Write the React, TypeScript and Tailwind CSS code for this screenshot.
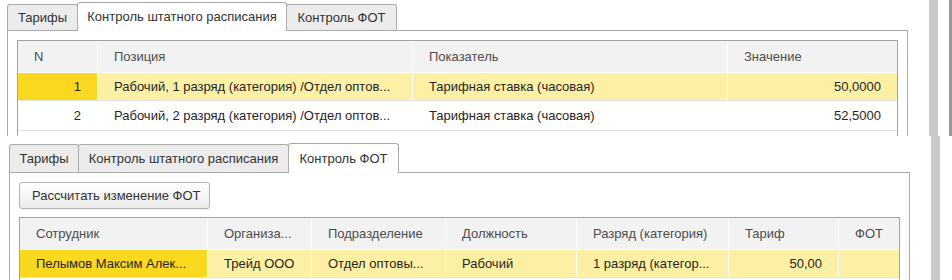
import React from "react";

type Tab = { label: string; w: number; active?: boolean };

function Tabs({ tabs, activeH, inactiveH }: { tabs: Tab[]; activeH: string; inactiveH: string }) {
  return (
    <div className="flex items-end">
      {tabs.map((t, i) => (
        <div
          key={t.label}
          style={{ width: t.w }}
          className={
            "relative flex items-center justify-center rounded-t-[3px] border-l border-r border-t border-[#ababab] text-[13px] text-[#333] " +
            (i > 0 ? "-ml-px " : "") +
            (t.active
              ? "z-20 -mb-px bg-white " + activeH
              : "z-10 bg-[#ececec] " + inactiveH)
          }
        >
          {t.label}
        </div>
      ))}
    </div>
  );
}

type Col = { title: string; w: number };

function HeaderRow({ cols }: { cols: Col[] }) {
  return (
    <div className="flex h-[32px] border-b border-white bg-[#f2f2f2] text-[13px] text-[#4d4d4d]">
      {cols.map((c, i) => (
        <div
          key={c.title}
          style={{ width: c.w }}
          className={
            "flex shrink-0 items-center pl-[16px] " +
            (i < cols.length - 1 ? "border-r border-white" : "")
          }
        >
          {c.title}
        </div>
      ))}
    </div>
  );
}

type Cell = { text: string; right?: boolean; current?: boolean };

function DataRow({ cols, cells, selected, h }: { cols: Col[]; cells: Cell[]; selected?: boolean; h: string }) {
  return (
    <div className={"flex border-b border-[#e3e3e3] text-[13px] text-[#262626] " + h + (selected ? " bg-[#fcf0a4]" : " bg-white")}>
      {cols.map((c, i) => {
        const cell = cells[i];
        return (
          <div
            key={c.title}
            style={{ width: c.w }}
            className={
              "flex shrink-0 items-center whitespace-nowrap overflow-hidden " +
              (cell.right ? "justify-end pr-[16px] " : "pl-[16px] ") +
              (i < cols.length - 1 ? "border-r border-white " : "") +
              (cell.current ? "bg-[#f9d81f]" : "")
            }
          >
            {cell.text}
          </div>
        );
      })}
    </div>
  );
}

const colsA: Col[] = [
  { title: "N", w: 80 },
  { title: "Позиция", w: 315 },
  { title: "Показатель", w: 315 },
  { title: "Значение", w: 169 },
];

const colsB: Col[] = [
  { title: "Сотрудник", w: 188 },
  { title: "Организа...", w: 104 },
  { title: "Подразделение", w: 134 },
  { title: "Должность", w: 131 },
  { title: "Разряд (категория)", w: 152 },
  { title: "Тариф", w: 110 },
  { title: "ФОТ", w: 60 },
];

export default function App() {
  return (
    <div
      className="h-[280px] w-[952px] overflow-hidden bg-white"
      style={{ fontFamily: '"Liberation Sans", Arial, sans-serif' }}
    >
      {/* Section A */}
      <div className="flex h-[136px] overflow-hidden">
        <div className="w-[7px] shrink-0" />
        <div className="flex w-[901px] shrink-0 flex-col pt-[2px]">
          <Tabs
            activeH="h-[29px]"
            inactiveH="h-[26px]"
            tabs={[
              { label: "Тарифы", w: 71 },
              { label: "Контроль штатного расписания", w: 210, active: true },
              { label: "Контроль ФОТ", w: 111 },
            ]}
          />
          <div className="flex-1 border-l border-r border-t border-[#ababab] px-[9px] pt-[9px]">
            <div className="h-[200px] border border-[#a3a3a3]">
              <HeaderRow cols={colsA} />
              <DataRow
                cols={colsA}
                selected
                h="h-[28px]"
                cells={[
                  { text: "1", right: true, current: true },
                  { text: "Рабочий, 1 разряд (категория) /Отдел оптов..." },
                  { text: "Тарифная ставка (часовая)" },
                  { text: "50,0000", right: true },
                ]}
              />
              <DataRow
                cols={colsA}
                h="h-[30px]"
                cells={[
                  { text: "2", right: true },
                  { text: "Рабочий, 2 разряд (категория) /Отдел оптов..." },
                  { text: "Тарифная ставка (часовая)" },
                  { text: "52,5000", right: true },
                ]}
              />
            </div>
          </div>
        </div>
        <div className="w-[21px] shrink-0" />
        <div className="w-[9px] shrink-0 bg-[#c9c9c9]" />
        <div className="w-[11px] shrink-0" />
        <div className="w-[3px] shrink-0 bg-[#9a9a9a]" />
      </div>

      {/* Section B */}
      <div className="flex h-[144px] overflow-hidden">
        <div className="w-[9px] shrink-0" />
        <div className="flex w-[901px] shrink-0 flex-col pt-[7px]">
          <Tabs
            activeH="h-[30px]"
            inactiveH="h-[28px]"
            tabs={[
              { label: "Тарифы", w: 70 },
              { label: "Контроль штатного расписания", w: 211 },
              { label: "Контроль ФОТ", w: 111, active: true },
            ]}
          />
          <div className="flex-1 border-l border-r border-t border-[#ababab] px-[9px] pt-[9px]">
            <div className="flex h-[27px] w-[191px] items-center rounded-[3px] border border-[#b4b4b4] bg-gradient-to-b from-white to-[#ebebeb] pl-[12px] text-[13px] text-[#333] shadow-[0_1px_0_rgba(0,0,0,0.05)]">
              Рассчитать изменение ФОТ
            </div>
            <div className="mt-[8px] h-[200px] border border-[#a3a3a3]">
              <HeaderRow cols={colsB} />
              <DataRow
                cols={colsB}
                selected
                h="h-[28px]"
                cells={[
                  { text: "Пелымов Максим Алек...", current: true },
                  { text: "Трейд ООО" },
                  { text: "Отдел оптовы..." },
                  { text: "Рабочий" },
                  { text: "1 разряд (категор..." },
                  { text: "50,00", right: true },
                  { text: "" },
                ]}
              />
            </div>
          </div>
        </div>
        <div className="w-[21px] shrink-0" />
        <div className="w-[9px] shrink-0 bg-[#c9c9c9]" />
        <div className="w-[12px] shrink-0" />
      </div>
    </div>
  );
}
